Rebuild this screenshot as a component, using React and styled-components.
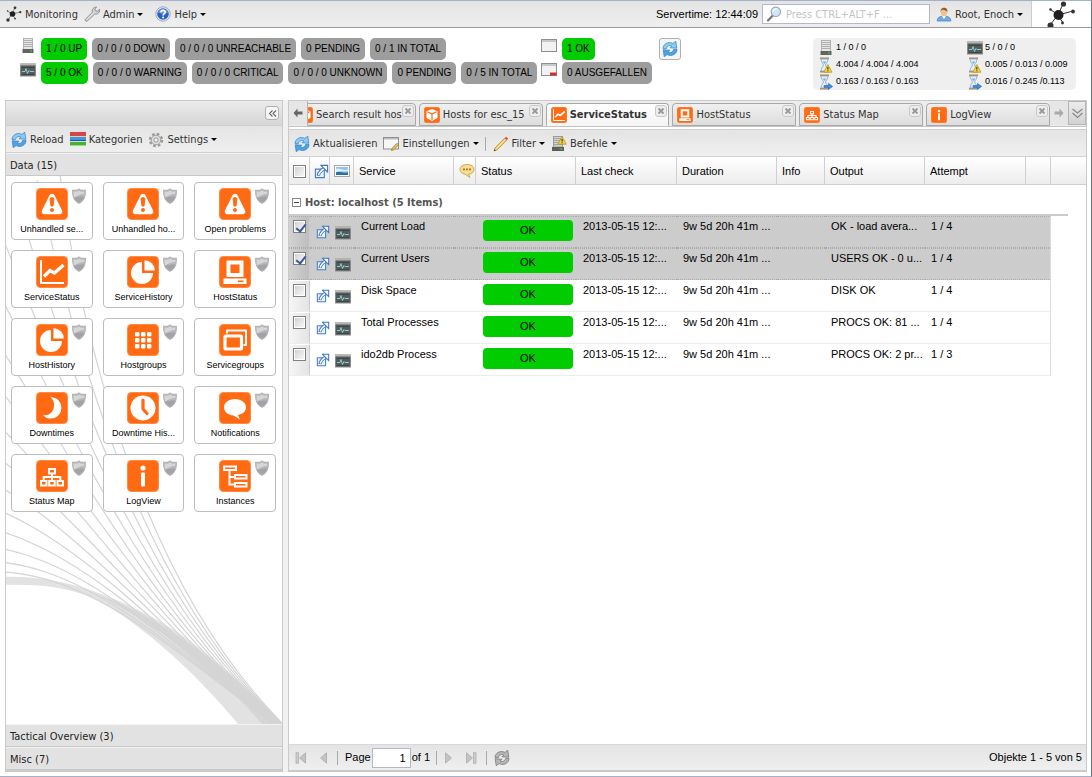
import React, { useState } from "react";
import styled, { createGlobalStyle, css } from "styled-components";

const GlobalStyle = createGlobalStyle`
  * {
    box-sizing: border-box;
  }

  body {
    margin: 0;
    background: #ffffff;
    font: 11px/13px "Liberation Sans", Arial, sans-serif;
    color: #000000;
  }

  button, input {
    font: inherit;
    color: inherit;
  }

  button {
    margin: 0;
    padding: 0;
    border: none;
    background: none;
    cursor: pointer;
  }
`;

const uiFont = css`
  font-family: "DejaVu Sans Condensed", Tahoma, sans-serif;
  font-size: 11px;
`;

const barFill = css`
  background: linear-gradient(#e4e4e4, #efefef);
`;

/* ---------- icons ---------- */

const Svg = ({ size = 16, box = 16, children }) => (
  <svg
    width={size}
    height={size}
    viewBox={`0 0 ${box} ${box}`}
    fill="none"
    aria-hidden="true"
  >
    {children}
  </svg>
);

const NodesIcon = () => (
  <Svg>
    <path d="M6 8L9 1.5M6 8L14.5 6M6 8L2 14M6 8L1.5 5M6 8L9 12.5" stroke="#666" strokeWidth="0.7" />
    <circle cx="6.5" cy="8" r="2.8" fill="#222" />
    <circle cx="9" cy="1.8" r="1.4" fill="#333" />
    <circle cx="14.3" cy="6.2" r="1.1" fill="#333" />
    <circle cx="2" cy="14" r="1.7" fill="#333" />
    <circle cx="1.6" cy="5" r="0.8" fill="#333" />
    <circle cx="9" cy="12.6" r="0.9" fill="#333" />
  </Svg>
);

const BrandLogo = () => (
  <svg width="32" height="26" viewBox="0 0 32 26" aria-hidden="true">
    <path
      d="M12 14L17 3M12 14L27 10M12 14L4 24M12 14L4 8M12 14L17 22"
      stroke="#333"
      strokeWidth="1"
    />
    <circle cx="12.5" cy="14" r="5" fill="#231f20" />
    <circle cx="17.5" cy="3" r="2.6" fill="#333" />
    <circle cx="27" cy="10.5" r="1.9" fill="#333" />
    <circle cx="4.5" cy="24.5" r="3" fill="#333" />
    <circle cx="4.5" cy="8.5" r="1.3" fill="#333" />
    <circle cx="16.5" cy="22" r="1.4" fill="#333" />
  </svg>
);

const WrenchIcon = () => (
  <Svg>
    <path
      d="M1.5 14.8L1 13.8L8.3 6.2C7.7 3.5 9.8 .8 12.6 1L10.8 3.2L12 5.2L14.6 5L15.6 3C16.4 6 13.6 8.8 10.8 8L3 15.2Z"
      fill="#d0d0d0"
      stroke="#808080"
      strokeWidth="0.8"
    />
    <path d="M2.5 14L10 6.5" stroke="#f6f6f6" strokeWidth="0.8" />
  </Svg>
);

const HelpIcon = () => (
  <Svg>
    <circle cx="8" cy="8" r="7.2" fill="#e9eef7" stroke="#8a97ad" strokeWidth="0.8" />
    <circle cx="8" cy="8" r="5.8" fill="#2a62c4" />
    <path d="M3 6.5A5.3 5.3 0 0 1 13 6.5C10 8 6 8 3 6.5Z" fill="#6f9ae2" />
    <path
      d="M5.9 6.3C5.9 3.8 10.2 3.8 10.2 6.2C10.2 7.8 8.1 7.7 8.1 9.4"
      stroke="#fff"
      strokeWidth="1.6"
    />
    <circle cx="8.1" cy="11.6" r="1" fill="#fff" />
  </Svg>
);

const SearchIcon = () => (
  <Svg>
    <path d="M2 14.5L6.8 9.4" stroke="#777" strokeWidth="2.2" strokeLinecap="round" />
    <circle cx="9.8" cy="5.8" r="4.7" fill="#cfe5f8" stroke="#9aa7b4" strokeWidth="1.1" />
    <path d="M7 5.5A3 3 0 0 1 11 3" stroke="#fff" strokeWidth="1.3" />
  </Svg>
);

const UserIcon = () => (
  <Svg>
    <path d="M1.2 15C1.2 11.5 3.5 10.2 8 10.2S14.8 11.5 14.8 15Z" fill="#6fabe6" stroke="#3f7cc3" strokeWidth="0.7" />
    <path d="M6 10L8 13L10 10Z" fill="#fff" />
    <ellipse cx="8" cy="5.8" rx="3.2" ry="4.2" fill="#f3c08c" />
    <path d="M4.6 6C4 .8 12 .2 11.5 6C10.5 4.5 8 3.5 6.5 3.8C5.5 4 5 5 4.6 6Z" fill="#8d5a2c" />
  </Svg>
);

const RefreshIcon = ({ grey = false }) => {
  const dark = grey ? "#6f6f6f" : "#2a7fc9";
  const light = grey ? "#b5b5b5" : "#8ccbf5";
  return (
    <Svg>
      <path
        d="M1 7.6C1 3 6.4 0 10.8 2.4L13.8 .3L14.8 7.2L8 6.8L9.8 5C7.4 3.8 5 5 4.4 7.6Z"
        fill={light}
        stroke={dark}
        strokeWidth="0.7"
      />
      <path
        d="M15 8.4C15 13 9.6 16 5.2 13.6L2.2 15.7L1.2 8.8L8 9.2L6.2 11C8.6 12.2 11 11 11.6 8.4Z"
        fill={grey ? light : "#4fa3e3"}
        stroke={dark}
        strokeWidth="0.7"
      />
    </Svg>
  );
};

const CategoriesIcon = () => (
  <Svg>
    <rect x="0" y="0" width="16" height="4" fill="#d84545" />
    <rect x="0" y="4" width="16" height="1" fill="#f4c0c0" />
    <rect x="0" y="5" width="16" height="3" fill="#3a9ad9" />
    <rect x="0" y="8" width="16" height="1" fill="#1c5f8f" />
    <rect x="0" y="9" width="16" height="1" fill="#c4e0f4" />
    <rect x="0" y="10" width="16" height="3" fill="#4fae32" />
    <rect x="0" y="13" width="16" height="1" fill="#9fd68c" />
  </Svg>
);

const GearIcon = () => (
  <Svg>
    <circle cx="8" cy="8" r="6" stroke="#9a9a9a" strokeWidth="2.4" strokeDasharray="2.6 2.11" />
    <circle cx="8" cy="8" r="4.8" fill="#dedede" stroke="#9c9c9c" strokeWidth="0.9" />
    <circle cx="8" cy="8" r="2.1" fill="#f4f4f4" stroke="#8f8f8f" strokeWidth="0.9" />
  </Svg>
);

const ServerIcon = () => (
  <Svg>
    <rect x="3.5" y="0.5" width="9" height="11" fill="#e6e6e6" stroke="#a5a5a5" strokeWidth="0.8" />
    <path d="M4 2.5H12M4 4.5H12M4 6.5H12M4 8.5H12" stroke="#a9a9a9" strokeWidth="0.9" />
    <rect x="2.5" y="11" width="11" height="4" fill="#636363" />
    <rect x="10" y="12.5" width="2" height="1" fill="#53d13d" />
  </Svg>
);

const MonitorIcon = () => (
  <Svg>
    <rect x="0.5" y="2" width="15" height="12" fill="#555b5b" stroke="#8b8b8b" />
    <rect x="0" y="1.5" width="16" height="2" fill="#b5b5b5" />
    <path d="M2 9.5H5L6 6.500L7.500 11.500L9 8.500L10 9.500H14" stroke="#86dcd9" strokeWidth="0.9" />
    <path d="M2 12.500H14M2 5.500H14" stroke="#3a4040" strokeWidth="0.8" />
  </Svg>
);

const WindowIcon = ({ down = false }) => (
  <Svg>
    <rect x="0.5" y="1.5" width="15" height="12" fill="#f2f2f2" stroke="#8f8f8f" />
    <rect x="1" y="2" width="14" height="2" fill="#c9c9c9" />
    {down && <rect x="9" y="10.5" width="6.5" height="3" fill="#d32f2f" />}
  </Svg>
);

const EditWindowIcon = () => (
  <Svg>
    <rect x="0.5" y="1.5" width="15" height="11.5" fill="#f7f7f7" stroke="#8f8f8f" />
    <rect x="1" y="2" width="14" height="1.5" fill="#bdbdbd" />
    <path d="M8.5 14.5L9.3 12L14 7.2L15.6 8.8L11 13.7Z" fill="#eebf55" stroke="#99702a" strokeWidth="0.7" />
  </Svg>
);

const PencilIcon = () => (
  <Svg>
    <path d="M1 15L2.2 11.8L11.8 2L13.8 4L4.2 13.8Z" fill="#f3cc62" stroke="#a98230" strokeWidth="0.7" />
    <path d="M11.800 2L13 .7L15.200 2.800L13.800 4Z" fill="#d8483a" />
    <path d="M1 15L1.6 13.200L2.800 14.400Z" fill="#333" />
    <path d="M3.600 12.600L12.400 3.400" stroke="#fbe9ae" strokeWidth="0.9" />
  </Svg>
);

const Warning = ({ x = 7, y = 0 }) => (
  <g transform={`translate(${x} ${y})`}>
    <path d="M4.5 .6L8.6 8.2H.4Z" fill="#f8d642" stroke="#b08a10" strokeWidth="0.7" />
    <path d="M4.5 3V5.6M4.5 6.3V7.3" stroke="#222" strokeWidth="1" />
  </g>
);

const ServerWarningIcon = () => (
  <Svg>
    <rect x="2.500" y="0.500" width="9" height="10.500" fill="#d2d2d2" stroke="#8d8d8d" strokeWidth="0.8" />
    <path d="M3 2.500H11M3 4.500H11M3 6.500H11M3 8.500H11" stroke="#999" strokeWidth="0.8" />
    <rect x="1" y="11" width="12" height="4" fill="#5d5d5d" />
    <rect x="8.5" y="12.5" width="3" height="1" fill="#53d13d" />
    <Warning x={6.6} y={0} />
  </Svg>
);

const HourglassIcon = ({ warning = false }) => (
  <Svg>
    <path d="M2 1.2H11M2 14.8H11" stroke="#b08858" strokeWidth="1.6" />
    <path
      d="M3 2C3 5.5 5.4 6.4 5.4 8S3 10.5 3 14H10C10 10.5 7.6 9.6 7.6 8S10 5.5 10 2Z"
      fill="#e4f0fb"
      stroke="#8fa9c4"
      strokeWidth="0.9"
    />
    <path d="M4.6 4.4H8.4L6.5 7Z" fill="#6fb1e8" />
    {warning ? (
      <Warning x={5.4} y={7} />
    ) : (
      <path d="M6 11.500H10.500V9.400L14.600 12.400L10.500 15.400V13.400H6Z" fill="#3d8fe0" stroke="#1f65ab" strokeWidth="0.6" />
    )}
  </Svg>
);

const OpenIcon = ({ size = 15 }) => (
  <Svg size={size}>
    <path d="M1.5 5.5H11V14.5H1.5Z" fill="#e8f2fd" stroke="#4a7cc6" strokeWidth="1.2" />
    <path d="M4.5 12.500C5 9.500 7 7 10.500 5" stroke="#3f74c4" strokeWidth="3.6" />
    <path d="M4.8 12C5.400 9.400 7.500 7 11 4.800" stroke="#fff" strokeWidth="1.6" />
    <path d="M7.500 1.500H14.500V8.500L12.200 6.400L9.800 3.900Z" fill="#fff" stroke="#3f74c4" strokeWidth="1.200" />
  </Svg>
);

const PictureIcon = () => (
  <Svg>
    <rect x="0.5" y="2.5" width="15" height="11" fill="#fff" stroke="#a5a5a5" />
    <rect x="2" y="4" width="12" height="8" fill="#8cc4ea" />
    <path d="M2 6C5 4.500 8 8 14 6.500V8C9 9 6 7.500 2 9Z" fill="#dff0fb" />
    <path d="M2 9.500C5 8 8 10.500 14 9.500V12H2Z" fill="#2c6e9f" />
  </Svg>
);

const CommentIcon = () => (
  <Svg>
    <path
      d="M8 1.5C12 1.5 15 3.2 15 6.3S12.5 11 9.5 11.2L11 14.5L6 11.2C3 10.8 1 9 1 6.3S4 1.5 8 1.5Z"
      fill="#f8dd94"
      stroke="#c9a050"
      strokeWidth="0.9"
    />
    <path d="M4.200 6.400H5.800M7.200 6.400H8.800M10.200 6.400H11.800" stroke="#8a5f1c" strokeWidth="1.6" />
  </Svg>
);

const ShieldIcon = () => (
  <Svg>
    <path
      d="M8 .8C9.6 2.4 12 2.6 14.500 2C14.400 5 14.800 12.600 8 15.400C1.200 12.600 1.600 5 1.500 2C4 2.600 6.400 2.400 8 .8Z"
      fill="#b8b8ba"
      stroke="#a8a8a8"
      strokeWidth="0.8"
    />
    <path d="M2.6 3.6C5 3.8 6.8 3.4 8 2.4C9.2 3.4 11 3.8 13.4 3.6L13.2 6C10 5.6 6 7.6 2.8 9.6Z" fill="#d6d6d6" />
    <path d="M3 10C6 8.6 9 8.8 13 8.2C12.4 11.6 10.8 13.2 8 14.3C5.4 13.2 3.8 12 3 10Z" fill="#a2a2aa" />
  </Svg>
);

const ArrowIcon = ({ flip = false, color = "#666" }) => (
  <Svg size={10} box={10}>
    <path
      d={flip ? "M9.5 5L5.5 .5V3.5H.5V6.5H5.5V9.5Z" : "M.5 5L4.5 .5V3.5H9.5V6.5H4.5V9.5Z"}
      fill={color}
    />
  </Svg>
);

const ChevronsIcon = ({ left = false }) => (
  <Svg size={11} box={11}>
    {left ? (
      <path d="M5.5 2.500L2.500 5.500L5.500 8.500M9 2.500L6 5.500L9 8.500" stroke="#666" strokeWidth="1.1" />
    ) : (
      <path d="M.5 1L5.5 5L10.5 1M.5 5L5.5 9.5L10.5 5" stroke="#888" strokeWidth="1.2" />
    )}
  </Svg>
);

const CloseIcon = () => (
  <Svg size={12} box={12}>
    <rect x="0.5" y="0.5" width="11" height="11" rx="2.5" fill="#eeeeee" stroke="#c8c8c8" />
    <path d="M3.5 3.5L8.5 8.5M8.5 3.5L3.5 8.5" stroke="#999" strokeWidth="1.8" />
  </Svg>
);

const PageIcon = ({ flip = false, end = false }) => (
  <Svg size={12} box={12}>
    <g transform={flip ? "translate(12 0) scale(-1 1)" : undefined}>
      {end && <rect x="1" y="0.8" width="2.4" height="10.4" fill="#cfcfcf" stroke="#9c9c9c" strokeWidth="0.6" />}
      <path d="M10.5 .8L4.6 6L10.5 11.2Z" fill="#c4c4c4" stroke="#9c9c9c" strokeWidth="0.6" />
    </g>
  </Svg>
);

const glyphs = {
  warning: (
    <>
      <path d="M16 8.5L23.5 23.5H8.500Z" fill="#fff" stroke="#fff" strokeWidth="5.500" strokeLinejoin="round" />
      <path d="M14 10.500Q16 8.500 18 10.500L17 18H15Z" fill="#ff6a13" stroke="#ff6a13" strokeLinejoin="round" />
      <circle cx="16" cy="22" r="2" fill="#ff6a13" />
    </>
  ),
  chart: (
    <>
      <path d="M5 4V27H28" stroke="#fff" strokeWidth="2" />
      <path d="M8 20.5L14 14.500L18.5 17L27.500 9" stroke="#fff" strokeWidth="3.4" />
    </>
  ),
  pie: (
    <>
      <path d="M15 6A11 11 0 1 0 26 17H15Z" fill="#fff" />
      <path d="M17.5 4.2A10.5 10.5 0 0 1 27.8 14.5H17.5Z" fill="#fff" />
    </>
  ),
  host: (
    <>
      <rect x="9.500" y="6.500" width="13" height="12.500" stroke="#fff" strokeWidth="4" />
      <rect x="4.5" y="22.500" width="23" height="5.5" fill="#fff" />
      <rect x="19" y="24.500" width="5.5" height="1.6" fill="#ff6a13" />
    </>
  ),
  grid: (
    <g fill="#fff">
      {[8, 14, 20].map((y) =>
        [8, 14, 20].map((x) => <rect key={`${x}-${y}`} x={x} y={y} width="4.4" height="4.4" rx="1.2" />)
      )}
    </g>
  ),
  windows: (
    <>
      <path d="M8 9.5V6.5H27V21H24.5" stroke="#fff" strokeWidth="2" strokeLinejoin="round" />
      <rect x="6" y="12" width="16.5" height="13" rx="1" stroke="#fff" strokeWidth="3.2" />
    </>
  ),
  moon: <path d="M14.5 5C30 6 28.5 27.5 13.5 26.5C11 26.3 8.5 25 7 23C18 25 21.5 11 14.5 5Z" fill="#fff" />,
  clock: (
    <>
      <circle cx="16" cy="16" r="12.5" fill="#fff" />
      <path d="M16 8V17L20 21.5" stroke="#ff6a13" strokeWidth="3.2" strokeLinecap="round" />
    </>
  ),
  bubble: <path d="M16 7C22.5 7 27 10.8 27 15.3C27 19.5 23.5 22.3 19 23L21 27.5L14.5 23.5C8.5 23 5 19.8 5 15.3C5 10.8 9.5 7 16 7Z" fill="#fff" />,
  tree: (
    <g stroke="#fff" strokeWidth="2">
      <rect x="13" y="9" width="6" height="4.5" />
      <rect x="5" y="21" width="5.5" height="4.5" />
      <rect x="13.2" y="21" width="5.5" height="4.5" />
      <rect x="21.5" y="21" width="5.5" height="4.5" />
      <path d="M16 14V20M7.7 20V17H24.3V20" />
    </g>
  ),
  info: (
    <g fill="#fff">
      <circle cx="16" cy="8" r="2.6" />
      <rect x="14" y="12.5" width="4" height="14" rx="1" />
    </g>
  ),
  instances: (
    <g stroke="#fff" strokeWidth="2">
      <rect x="5" y="6.5" width="12" height="3.5" />
      <rect x="16" y="15" width="11.5" height="3.5" />
      <rect x="16" y="23" width="11.5" height="3.5" />
      <path d="M10.5 11V24.5H15M10.5 17H15" />
    </g>
  ),
  cube: (
    <>
      <path d="M16 4L27 8.5V22L16 28L5 22V8.5Z" fill="#fff" />
      <path d="M7 9.5L16 14L25 9.5M16 14V26" stroke="#ff6a13" strokeWidth="2.4" />
    </>
  ),
};

const AppIcon = ({ name, size = 32 }) => (
  <Svg size={size} box={32}>
    <rect width="32" height="32" rx="4.5" fill="#ff8a45" />
    <rect x="1" y="1" width="30" height="30" rx="4" fill="#ff6a13" />
    {glyphs[name]}
  </Svg>
);

/* ---------- page frame ---------- */

const Page = styled.div`
  height: 100vh;
  display: flex;
  flex-direction: column;
  border: 1px solid #a3b1c9;
  border-left: none;
  border-right-color: #66788f;
`;

const MenuBar = styled.nav`
  ${barFill}
  display: flex;
  align-items: center;
  height: 27px;
  flex: none;
  padding-left: 6px;
  border-bottom: 1px solid #999999;
`;

const MenuButton = styled.button`
  ${uiFont}
  display: flex;
  align-items: center;
  gap: 3px;
  margin-right: ${(props) => props.$space || 6}px;
  color: #333333;
  white-space: nowrap;
`;

const Caret = styled.span`
  border: 3px solid transparent;
  border-top-color: #000000;
  border-bottom: none;
`;

const Spacer = styled.div`
  flex: 1;
`;

const SearchBox = styled.label`
  display: flex;
  align-items: center;
  gap: 4px;
  width: 168px;
  height: 20px;
  margin: 0 6px 0 4px;
  padding-left: 3px;
  border: 1px solid #b5b8c8;
  background: #ffffff;

  svg {
    flex: none;
  }
`;

const SearchInput = styled.input`
  ${uiFont}
  width: 100%;
  min-width: 0;
  padding: 0;
  border: none;
  outline: none;

  &::placeholder {
    color: #c4c4c4;
  }
`;

const Brand = styled.div`
  display: flex;
  justify-content: center;
  width: 60px;
  height: 26px;
  border-left: 1px solid #cccccc;
  background: #ffffff;
`;

/* ---------- status summary ---------- */

const Summary = styled.header`
  display: flex;
  align-items: flex-start;
  flex: none;
  height: 72px;
  padding: 10px 15px 0 20px;
`;

const CountRows = styled.div`
  display: flex;
  flex-direction: column;
  gap: 2px;
  flex: 0 0 ${(props) => props.$width}px;
`;

const CountRow = styled.div`
  display: flex;
  gap: 5px;

  svg {
    flex: none;
  }
`;

const Count = styled.span`
  height: 22px;
  padding: 0 5px;
  border-radius: 5px;
  font-size: 10px;
  line-height: 22px;
  white-space: nowrap;
  background: ${(props) => (props.$good ? "#00cc00" : "#9d9d9d")};
`;

const SquareButton = styled.button`
  display: flex;
  align-items: center;
  justify-content: center;
  width: ${(props) => props.$size}px;
  height: ${(props) => props.$size}px;
  flex: none;
  border: 1px solid #b0b0b0;
  border-radius: 3px;
  background: #f6f6f6;
`;

const Stats = styled.dl`
  display: grid;
  grid-template-columns: 149px 1fr;
  width: 263px;
  margin: 0;
  padding: 1px 0 0 5px;
  border-radius: 5px;
  background: #efefef;
`;

const Stat = styled.div`
  display: flex;
  align-items: center;
  gap: 2px;
  height: 17px;
  font-size: 9px;
  white-space: nowrap;

  dt {
    display: flex;
  }

  dd {
    margin: 0;
  }
`;

/* ---------- sidebar ---------- */

const Workspace = styled.div`
  flex: 1;
  min-height: 0;
  display: grid;
  grid-template-columns: 278px 1fr;
  gap: 5px;
  padding: 0 4px 4px 5px;
  background: linear-gradient(#f1f1f1, #f1f1f1) 283px 0 / 5px calc(100% - 4px) no-repeat;
`;

const Panel = styled.section`
  display: flex;
  flex-direction: column;
  min-width: 0;
  min-height: 0;
  border: 1px solid #cacaca;
  border-bottom-width: 2px;
  background: #ffffff;
`;

const PanelHeader = styled.div`
  display: flex;
  align-items: center;
  justify-content: flex-end;
  height: 25px;
  flex: none;
  padding-right: 3px;
  border-bottom: 1px solid #d0d0d0;
  background: linear-gradient(#ebebeb, #d6d6d6);
`;

const Toolbar = styled.div`
  ${barFill}
  display: flex;
  align-items: center;
  height: 27px;
  flex: none;
  padding: 1px 0 0 5px;
  border-bottom: 1px solid #d0d0d0;
`;

const Divider = styled.span`
  width: 1px;
  height: 14px;
  margin: 0 7px 0 ${(props) => props.$before || 0}px;
  background: #aaaaaa;
`;

const SectionTitle = styled.button`
  ${uiFont}
  height: 23px;
  flex: none;
  padding: 2px 4px 0;
  border-top: 1px solid #f3f3f3;
  border-bottom: 1px solid #c8c8c8;
  background: #e2e2e2;
  color: #222222;
  text-align: left;
`;

const SectionBody = styled.div`
  position: relative;
  flex: 1;
  min-height: 0;
  overflow: hidden;
`;

const Swoosh = styled.svg`
  position: absolute;
  left: 0;
  bottom: 0;
`;

const Tiles = styled.div`
  position: relative;
  display: grid;
  grid-template-columns: repeat(3, 1fr);
  gap: 10px;
  padding: 6px 6px 0 5px;
`;

const Tile = styled.button`
  position: relative;
  display: flex;
  flex-direction: column;
  align-items: center;
  gap: 3px;
  height: 58px;
  padding-top: 5px;
  border: 1px solid #bdbdbd;
  border-radius: 4px;
  background: #ffffff;
  font-size: 9px;
  white-space: nowrap;
`;

const TileBadge = styled.span`
  position: absolute;
  top: 5px;
  right: 5px;
`;

/* ---------- main panel ---------- */

const TabStrip = styled.div`
  display: flex;
  height: 29px;
  flex: none;
  padding-bottom: 3px;
  border-bottom: 1px solid #d0d0d0;
  background: linear-gradient(#ececec 0 25px, #c4c4c4 25px 26px, #ffffff 26px);
`;

const StripButton = styled.button`
  display: flex;
  align-items: center;
  justify-content: center;
  width: 18px;
  flex: none;
  margin-bottom: 1px;
  border: ${(props) => (props.$framed ? "1px solid #b5b5b5" : "none")};
  background: ${(props) => (props.$framed ? "linear-gradient(#ececec, #d2d2d2)" : "#e6e6e6")};
`;

const TabWindow = styled.div`
  flex: 1;
  min-width: 0;
  overflow: hidden;
  border-left: 1px solid #b5b5b5;
`;

const TabTrack = styled.div`
  display: flex;
  gap: 3px;
  height: 100%;
  margin-left: -16px;
  padding-top: 2px;
`;

const Tab = styled.div`
  display: flex;
  flex: 1;
  min-width: 0;
  padding: 0 1px 0 4px;
  border: 1px solid #a8a8a8;
  border-bottom-color: ${(props) => (props.$active ? "#f4f4f4" : "#a8a8a8")};
  border-radius: 4px 4px 0 0;
  background: ${(props) =>
    props.$active ? "linear-gradient(#ffffff, #f4f4f4)" : "linear-gradient(#f0f0f0, #dddddd)"};
`;

const TabLabel = styled.button`
  ${uiFont}
  display: flex;
  align-items: center;
  gap: 3px;
  flex: 1;
  min-width: 0;
  font-weight: ${(props) => (props.$active ? "bold" : "normal")};
  color: #333333;
  text-align: left;
  white-space: nowrap;

  svg {
    flex: none;
  }
`;

const TabClose = styled.button`
  align-self: flex-start;
  display: flex;
  margin-top: 1px;
`;

const GridArea = styled.div`
  flex: 1;
  min-height: 0;
  overflow: hidden;
`;

const Table = styled.table`
  width: 100%;
  table-layout: fixed;
  border-collapse: separate;
  border-spacing: 0;
`;

const HeadCell = styled.th`
  height: 28px;
  padding: 1px 0 0 ${(props) => (props.$icon ? 4 : 5)}px;
  border-right: 1px solid #cfcfcf;
  border-bottom: 1px solid #cfcfcf;
  background: linear-gradient(#ffffff, #ececec);
  font-weight: normal;
  text-align: left;
  white-space: nowrap;

  &:last-child {
    border-right: none;
  }

  svg, input {
    display: block;
  }
`;

const GroupCell = styled.th`
  padding: 0 18px 0 0;
  text-align: left;
`;

const GroupTitle = styled.div`
  ${uiFont}
  display: flex;
  align-items: center;
  gap: 4px;
  height: 31px;
  padding: 5px 0 0 3px;
  border-bottom: 2px solid #cccccc;
  color: #555555;
`;

const Collapse = styled.button`
  width: 9px;
  height: 9px;
  border: 1px solid #888888;
  background: linear-gradient(#444444, #444444) center / 5px 1px no-repeat;
`;

const Row = styled.tr`
  td {
    border-top: 1px ${(props) => (props.$selected ? "dotted #aaaaaa" : "solid #ffffff")};
    border-bottom: 1px ${(props) => (props.$selected ? "dotted #aaaaaa" : "solid #ededed")};
    background: ${(props) => (props.$selected ? "#cccccc" : "#ffffff")};
  }

  td:nth-last-child(2) {
    border-right: 1px solid #dddddd;
  }

  td:last-child {
    border: none;
    background: none;
  }
`;

const Cell = styled.td`
  height: 32px;
  padding: 3px 3px 0 ${(props) => props.$left || 7}px;
  overflow: hidden;
  vertical-align: top;
  white-space: nowrap;

  svg, input {
    display: block;
  }

  svg {
    margin-top: 5px;
  }
`;

const CheckCell = styled(Cell)`
  && {
    border-right: 1px solid #cccccc;
    background: linear-gradient(90deg, ${(props) => (props.$selected ? "#d2d2d2, #bebebe" : "#f6f6f6, #e4e4e4")});
  }
`;

const CheckBox = styled.input.attrs({ type: "checkbox" })`
  appearance: none;
  position: relative;
  width: 13px;
  height: 13px;
  margin: 0;
  border: 1px solid #808080;
  background: linear-gradient(135deg, #cfcfcf, #fafafa);
  box-shadow: inset 0 0 0 1px #ffffff;

  &:checked::after {
    content: "";
    position: absolute;
    top: 1px;
    left: 4px;
    width: 4px;
    height: 8px;
    border: solid #3b5a9d;
    border-width: 0 2px 2px 0;
    transform: rotate(38deg);
  }
`;

const StatusBadge = styled.div`
  height: 21px;
  border-radius: 4px;
  background: #00cc00;
  line-height: 21px;
  text-align: center;
`;

const Pager = styled.footer`
  ${barFill}
  display: flex;
  align-items: center;
  height: 26px;
  flex: none;
  padding: 0 4px 0 6px;
  border-top: 1px solid #d8d8d8;

  label {
    display: flex;
    align-items: center;
    gap: 1px;
  }
`;

const PagerButton = styled.button`
  display: flex;
  margin-right: 9px;
`;

const PageInput = styled.input`
  width: 39px;
  height: 20px;
  padding: 0 4px;
  border: 1px solid #b5b8c8;
  background: #ffffff;
  text-align: right;
`;

/* ---------- data ---------- */

const hostCounts = ["1 / 0 UP", "0 / 0 / 0 DOWN", "0 / 0 / 0 UNREACHABLE", "0 PENDING", "0 / 1 IN TOTAL"];

const serviceCounts = [
  "5 / 0 OK",
  "0 / 0 / 0 WARNING",
  "0 / 0 / 0 CRITICAL",
  "0 / 0 / 0 UNKNOWN",
  "0 PENDING",
  "0 / 5 IN TOTAL",
];

const stats = [
  { name: "Hosts", icon: <ServerIcon />, value: "1 / 0 / 0" },
  { name: "Services", icon: <MonitorIcon />, value: "5 / 0 / 0" },
  { name: "Host execution time", icon: <HourglassIcon warning />, value: "4.004 / 4.004 / 4.004" },
  { name: "Service execution time", icon: <HourglassIcon warning />, value: "0.005 / 0.013 / 0.009" },
  { name: "Host latency", icon: <HourglassIcon />, value: "0.163 / 0.163 / 0.163" },
  { name: "Service latency", icon: <HourglassIcon />, value: "0.016 / 0.245 /0.113" },
];

const tiles = [
  ["warning", "Unhandled se..."],
  ["warning", "Unhandled ho..."],
  ["warning", "Open problems"],
  ["chart", "ServiceStatus"],
  ["pie", "ServiceHistory"],
  ["host", "HostStatus"],
  ["pie", "HostHistory"],
  ["grid", "Hostgroups"],
  ["windows", "Servicegroups"],
  ["moon", "Downtimes"],
  ["clock", "Downtime His..."],
  ["bubble", "Notifications"],
  ["tree", "Status Map"],
  ["info", "LogView"],
  ["instances", "Instances"],
];

const tabs = [
  ["cube", "Search result hos"],
  ["cube", "Hosts for esc_15"],
  ["chart", "ServiceStatus"],
  ["host", "HostStatus"],
  ["tree", "Status Map"],
  ["info", "LogView"],
];

const columnWidths = [21, 20, 24, 100, 22, 100, 101, 100, 48, 100, 101, 25];

const services = [
  { name: "Current Load", output: "OK - load avera...", attempt: "1 / 4" },
  { name: "Current Users", output: "USERS OK - 0 u...", attempt: "1 / 4" },
  { name: "Disk Space", output: "DISK OK", attempt: "1 / 4" },
  { name: "Total Processes", output: "PROCS OK: 81 ...", attempt: "1 / 4" },
  { name: "ido2db Process", output: "PROCS OK: 2 pr...", attempt: "1 / 3" },
];

// Each strand is a blend between the outermost curve and the top of the band.
const outer = [60, 175, 80, 330, 140, 580, 282, 723];
const inner = [-160, 640, 20, 500, 130, 620, 272, 723];

const strands = Array.from({ length: 15 }, (_, i) => {
  const w = 1 - Math.pow(1 - i / 15, 1.6);
  const [x0, y0, x1, y1, x2, y2, x3, y3] = outer.map((from, k) => {
    const blend = k === 1 ? w * w : w;
    return from + (inner[k] - from) * blend;
  });
  return `M${x0} ${y0}C${x1} ${y1} ${x2} ${y2} ${x3} ${y3}`;
});

function Background() {
  return (
    <Swoosh width="276" height="549" viewBox="6 175 276 549" fill="none" aria-hidden="true">
      <path
        d="M0 577C60 574 110 595 150 616C200 642 250 690 283 724H238C200 678 150 630 95 598C60 585 30 584 0 585Z"
        fill="#e2e2e2"
      />
      <path d="M95 594C150 612 215 655 283 724H262C220 675 160 625 95 594Z" fill="#d6d6d6" />
      {strands.map((d) => (
        <path key={d} d={d} stroke="#d4d4d4" strokeWidth="1.2" />
      ))}
    </Swoosh>
  );
}

function TopMenu() {
  return (
    <MenuBar>
      <MenuButton>
        <NodesIcon />
        Monitoring
      </MenuButton>
      <MenuButton $space={12}>
        <WrenchIcon />
        Admin
        <Caret />
      </MenuButton>
      <MenuButton>
        <HelpIcon />
        Help
        <Caret />
      </MenuButton>
      <Spacer />
      <span>Servertime: 12:44:09</span>
      <SearchBox>
        <SearchIcon />
        <SearchInput type="text" aria-label="Search" placeholder="Press CTRL+ALT+F ..." />
      </SearchBox>
      <MenuButton $space={8}>
        <UserIcon />
        Root, Enoch
        <Caret />
      </MenuButton>
      <Brand>
        <BrandLogo />
      </Brand>
    </MenuBar>
  );
}

function StatusSummary() {
  return (
    <Summary>
      <CountRows $width={521}>
        <CountRow>
          <ServerIcon />
          {hostCounts.map((text, i) => (
            <Count key={text} $good={i === 0}>
              {text}
            </Count>
          ))}
        </CountRow>
        <CountRow>
          <MonitorIcon />
          {serviceCounts.map((text, i) => (
            <Count key={text} $good={i === 0}>
              {text}
            </Count>
          ))}
        </CountRow>
      </CountRows>
      <CountRows $width={118}>
        <CountRow>
          <WindowIcon />
          <Count $good>1 OK</Count>
        </CountRow>
        <CountRow>
          <WindowIcon down />
          <Count>0 AUSGEFALLEN</Count>
        </CountRow>
      </CountRows>
      <SquareButton $size={22} aria-label="Refresh status">
        <RefreshIcon />
      </SquareButton>
      <Spacer />
      <Stats>
        {stats.map((stat) => (
          <Stat key={stat.name}>
            <dt aria-label={stat.name}>{stat.icon}</dt>
            <dd>{stat.value}</dd>
          </Stat>
        ))}
      </Stats>
    </Summary>
  );
}

function Sidebar() {
  return (
    <Panel>
      <PanelHeader>
        <SquareButton $size={14} aria-label="Collapse sidebar">
          <ChevronsIcon left />
        </SquareButton>
      </PanelHeader>
      <Toolbar>
        <MenuButton>
          <RefreshIcon />
          Reload
        </MenuButton>
        <MenuButton>
          <CategoriesIcon />
          Kategorien
        </MenuButton>
        <MenuButton>
          <GearIcon />
          Settings
          <Caret />
        </MenuButton>
      </Toolbar>
      <SectionTitle>Data (15)</SectionTitle>
      <SectionBody>
        <Background />
        <Tiles>
          {tiles.map(([icon, label]) => (
            <Tile key={label}>
              <AppIcon name={icon} />
              {label}
              <TileBadge>
                <ShieldIcon />
              </TileBadge>
            </Tile>
          ))}
        </Tiles>
      </SectionBody>
      <SectionTitle>Tactical Overview (3)</SectionTitle>
      <SectionTitle>Misc (7)</SectionTitle>
    </Panel>
  );
}

function Tabs() {
  return (
    <TabStrip>
      <StripButton aria-label="Scroll left">
        <ArrowIcon />
      </StripButton>
      <TabWindow>
        <TabTrack>
          {tabs.map(([icon, label]) => {
            const active = label === "ServiceStatus";
            return (
              <Tab key={label} $active={active}>
                <TabLabel $active={active}>
                  <AppIcon name={icon} size={16} />
                  {label}
                </TabLabel>
                <TabClose aria-label={`Close ${label}`}>
                  <CloseIcon />
                </TabClose>
              </Tab>
            );
          })}
        </TabTrack>
      </TabWindow>
      <StripButton aria-label="Scroll right">
        <ArrowIcon flip color="#aaaaaa" />
      </StripButton>
      <StripButton $framed aria-label="All tabs">
        <ChevronsIcon />
      </StripButton>
    </TabStrip>
  );
}

function ServiceTable() {
  const [selected, setSelected] = useState(["Current Load", "Current Users"]);

  const toggle = (name) =>
    setSelected((names) =>
      names.includes(name) ? names.filter((n) => n !== name) : [...names, name]
    );

  return (
    <Table>
      <colgroup>
        {columnWidths.map((width, i) => (
          <col key={i} style={{ width }} />
        ))}
        <col />
      </colgroup>
      <thead>
        <tr>
          <HeadCell $icon>
            <CheckBox aria-label="Select all" />
          </HeadCell>
          <HeadCell $icon>
            <OpenIcon />
          </HeadCell>
          <HeadCell $icon>
            <PictureIcon />
          </HeadCell>
          <HeadCell>Service</HeadCell>
          <HeadCell>
            <CommentIcon />
          </HeadCell>
          <HeadCell>Status</HeadCell>
          <HeadCell>Last check</HeadCell>
          <HeadCell>Duration</HeadCell>
          <HeadCell>Info</HeadCell>
          <HeadCell>Output</HeadCell>
          <HeadCell>Attempt</HeadCell>
          <HeadCell />
          <HeadCell />
        </tr>
      </thead>
      <tbody>
        <tr>
          <GroupCell colSpan={13}>
            <GroupTitle>
              <Collapse aria-label="Collapse group" />
              Host: localhost (5 Items)
            </GroupTitle>
          </GroupCell>
        </tr>
        {services.map(({ name, output, attempt }) => {
          const isSelected = selected.includes(name);
          return (
            <Row key={name} $selected={isSelected}>
              <CheckCell $left={4} $selected={isSelected}>
                <CheckBox
                  aria-label={name}
                  checked={isSelected}
                  onChange={() => toggle(name)}
                />
              </CheckCell>
              <Cell $left={6}>
                <OpenIcon size={14} />
              </Cell>
              <Cell $left={5}>
                <MonitorIcon />
              </Cell>
              <Cell>{name}</Cell>
              <Cell />
              <Cell>
                <StatusBadge>OK</StatusBadge>
              </Cell>
              <Cell>2013-05-15 12:...</Cell>
              <Cell $left={6}>9w 5d 20h 41m ...</Cell>
              <Cell />
              <Cell $left={6}>{output}</Cell>
              <Cell $left={6}>{attempt}</Cell>
              <Cell />
              <Cell />
            </Row>
          );
        })}
      </tbody>
    </Table>
  );
}

function Paging() {
  return (
    <Pager>
      <PagerButton aria-label="First page">
        <PageIcon end />
      </PagerButton>
      <PagerButton aria-label="Previous page">
        <PageIcon />
      </PagerButton>
      <Divider />
      <label>
        Page
        <PageInput type="text" defaultValue="1" />
        of 1
      </label>
      <Divider $before={6} />
      <PagerButton aria-label="Next page">
        <PageIcon flip />
      </PagerButton>
      <PagerButton aria-label="Last page">
        <PageIcon flip end />
      </PagerButton>
      <Divider />
      <PagerButton aria-label="Refresh">
        <RefreshIcon grey />
      </PagerButton>
      <Spacer />
      <span>Objekte 1 - 5 von 5</span>
    </Pager>
  );
}

function MainPanel() {
  return (
    <Panel>
      <Tabs />
      <Toolbar>
        <MenuButton>
          <RefreshIcon />
          Aktualisieren
        </MenuButton>
        <MenuButton>
          <EditWindowIcon />
          Einstellungen
          <Caret />
        </MenuButton>
        <Divider />
        <MenuButton>
          <PencilIcon />
          Filter
          <Caret />
        </MenuButton>
        <MenuButton>
          <ServerWarningIcon />
          Befehle
          <Caret />
        </MenuButton>
      </Toolbar>
      <GridArea>
        <ServiceTable />
      </GridArea>
      <Paging />
    </Panel>
  );
}

function App() {
  return (
    <>
      <GlobalStyle />
      <Page>
        <TopMenu />
        <StatusSummary />
        <Workspace>
          <Sidebar />
          <MainPanel />
        </Workspace>
      </Page>
    </>
  );
}

export default App;
